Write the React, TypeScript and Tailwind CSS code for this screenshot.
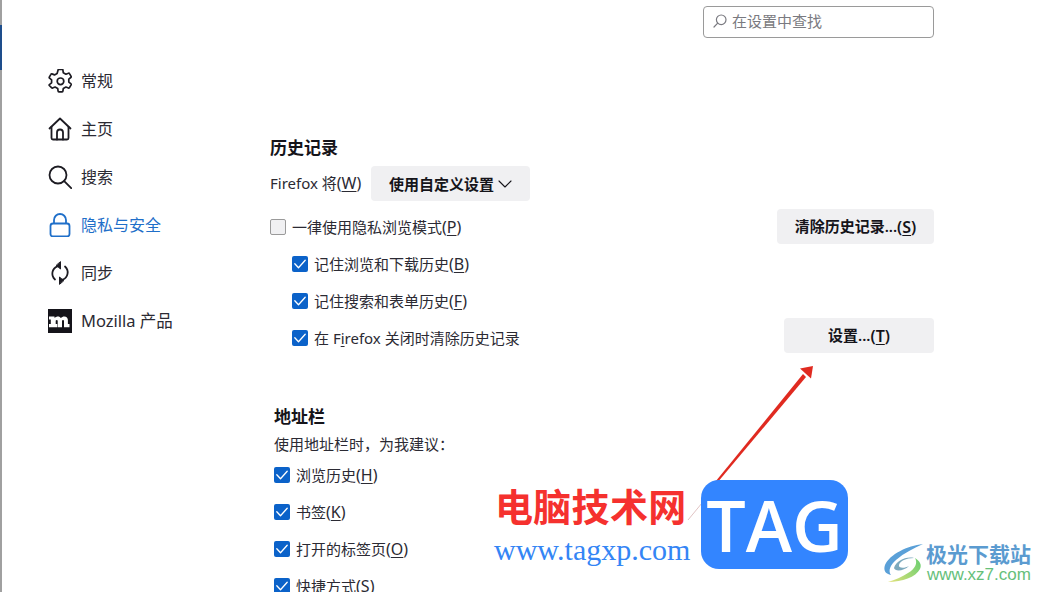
const FONT = "font-['Noto_Sans','Noto_Sans_CJK_SC',sans-serif]";

function Gear() {
  return (
    <svg width="24" height="24" viewBox="0 0 24 24" fill="none" stroke="#1c1b22" strokeWidth="1.7" strokeLinejoin="round">
      <path d="M9.600 1.600c0-.5.400-.8.800-.8h3.200c.4 0 .8.300.8.800l.4 2.700 2.600 1.400 2.500-1c.4-.2.900 0 1.100.4l1.600 2.800c.2.400.1.800-.3 1.100l-2 1.600v3l2 1.600c.4.300.5.700.3 1.100l-1.600 2.800c-.2.400-.7.600-1.100.4l-2.500-1-2.600 1.400-.4 2.700c0 .5-.4.800-.8.800h-3.200c-.4 0-.8-.3-.8-.8l-.4-2.700-2.600-1.400-2.500 1c-.4.200-.9 0-1.100-.4L.800 17c-.2-.4-.1-.8.300-1.100l2-1.600v-3l-2-1.600C.700 9.400.600 9 .800 8.600l1.600-2.800c.2-.4.700-.6 1.100-.4l2.500 1 2.600-1.400z" transform="translate(.5 -.5)" />
      <circle cx="12.500" cy="12.300" r="3.300" />
    </svg>
  );
}
function Home() {
  return (
    <svg width="24" height="24" viewBox="0 0 24 24" fill="none" stroke="#1c1b22" strokeWidth="1.8" strokeLinejoin="round" strokeLinecap="round">
      <path d="M1.500 11.500 12 1.500l10.500 10" />
      <path d="M3.500 10v11a1.500 1.500 0 0 0 1.500 1.500h14a1.500 1.500 0 0 0 1.500-1.500V10" />
      <path d="M9 22.500V15.500a3 3 0 0 1 6 0v7" />
    </svg>
  );
}
function Search() {
  return (
    <svg width="24" height="24" viewBox="0 0 24 24" fill="none" stroke="#1c1b22" strokeWidth="1.8" strokeLinecap="round">
      <circle cx="10" cy="10" r="8.500" />
      <path d="m16.200 16.200 7 7" />
    </svg>
  );
}
function Lock() {
  return (
    <svg width="24" height="24" viewBox="0 0 24 24" fill="none" stroke="#1f6fc9" strokeWidth="1.800" strokeLinejoin="round">
      <rect x="2.500" y="10.500" width="19" height="13" rx="2.500" />
      <path d="M6 10.500V7a6 6 0 0 1 12 0v3.500" />
    </svg>
  );
}
function Sync() {
  return (
    <svg width="24" height="24" viewBox="0 0 24 24" fill="none" stroke="#1c1b22" strokeWidth="1.800" strokeLinecap="round">
      <path d="M9.500 5.300A7.800 7.800 0 0 0 7 18.500" />
      <path d="M14.500 18.700A7.800 7.800 0 0 0 17 5.500" />
      <path d="M12.500 1v7L8.500 4.500z" fill="#1c1b22" strokeWidth="1" strokeLinejoin="round" />
      <path d="M11.500 23v-7l4 3.500z" fill="#1c1b22" strokeWidth="1" strokeLinejoin="round" />
    </svg>
  );
}
function MozillaM() {
  return (
    <div className="flex h-6 w-6 items-center justify-center bg-[#15141a]">
      <svg width="24" height="24" viewBox="0 0 24 24" fill="#fff">
        <path d="M1 7.600h5.400l.3 1.300c.9-1 2-1.500 3.200-1.500 1.400 0 2.400.6 2.900 1.700 1-1.100 2.200-1.700 3.500-1.700 2.200 0 3.600 1.400 3.600 3.700v4h1.600v3.100H16v-6.200c0-.7-.3-1.100-.9-1.100-.4 0-.8.200-1.100.5v6.800H9.700v-6.200c0-.7-.3-1.100-.9-1.100-.4 0-.8.200-1.100.5v3.700h1.500v3.100H1v-3.100h1.800v-4.700H1z" />
      </svg>
    </div>
  );
}

function NavItem({ icon, label, active }: { icon: React.ReactNode; label: React.ReactNode; active?: boolean }) {
  return (
    <div className={`flex h-12 items-center gap-[9px] text-[16px] leading-6 ${active ? "text-[#1f6fc9]" : "text-[#2b2a33]"}`}>
      <span className="flex h-6 w-6 shrink-0 items-center justify-center">{icon}</span>
      <span>{label}</span>
    </div>
  );
}

function Mnemonic({ children }: { children: string }) {
  return (
    <span className="text-[16px]">
      (<span className="underline underline-offset-2">{children}</span>)
    </span>
  );
}

function Check({ checked = true }: { checked?: boolean }) {
  if (!checked) {
    return <span className="h-4 w-4 shrink-0 rounded-[2px] border border-[#9a9a9a] bg-[#f0f0f2]" />;
  }
  return (
    <span className="flex h-4 w-4 shrink-0 items-center justify-center rounded-[2px] bg-[#0b62c9]">
      <svg width="14" height="14" viewBox="0 0 14 14" fill="none" stroke="#fff" strokeWidth="1.300" strokeLinecap="round" strokeLinejoin="round">
        <path d="m1.800 6.800 3.700 4 6.700-7.600" />
      </svg>
    </span>
  );
}

function CheckRow({ children, checked, className = "" }: { children: React.ReactNode; checked?: boolean; className?: string }) {
  return (
    <div className={`flex h-5 items-center gap-[6px] text-[15px] leading-5 text-[#2b2a33] ${className}`}>
      <Check checked={checked} />
      <span className="whitespace-nowrap">{children}</span>
    </div>
  );
}

function Btn({ children, className = "" }: { children: React.ReactNode; className?: string }) {
  return (
    <div className={`flex h-[35px] items-center justify-center rounded-[4px] bg-[#f0f0f2] text-[15px] font-semibold text-[#15141a] ${className}`}>
      {children}
    </div>
  );
}

export default function App() {
  return (
    <div className={`relative h-[592px] w-[1042px] overflow-hidden bg-white ${FONT}`}>
      <div className="absolute left-0 top-0 h-full w-[2px] bg-[#a0a0a0]" />
      <div className="absolute left-0 top-[25px] h-[45px] w-[2px] bg-[#1e4e8c]" />

      <div className="flex h-full">
        <nav className="w-[270px] shrink-0 pl-[48px] pt-[57px]">
          <NavItem icon={<Gear />} label="常规" />
          <NavItem icon={<Home />} label="主页" />
          <NavItem icon={<Search />} label="搜索" />
          <NavItem icon={<Lock />} label="隐私与安全" active />
          <NavItem icon={<Sync />} label="同步" />
          <NavItem icon={<MozillaM />} label={<span className="text-[16.500px]">Mozilla 产品</span>} />
        </nav>

        <main className="w-[664px] shrink-0 pt-[6px]">
          <div className="flex justify-end">
            <div className="flex h-[32px] w-[231px] items-center rounded-[4px] border border-[#9a9a9a] pb-[2px] pl-[9px] text-[15px] text-[#7a7a80]">
              <svg width="14" height="14" viewBox="0 0 14 14" fill="none" stroke="#7a7a80" strokeWidth="1.200" strokeLinecap="round" className="mr-[5px]">
                <circle cx="8.200" cy="5.800" r="4.800" />
                <path d="M4.700 9.200 1 13" />
              </svg>
              在设置中查找
            </div>
          </div>

          <h2 className="mt-[98px] text-[17px] font-bold leading-6 text-[#15141a]">历史记录</h2>

          <div className="mt-[6px] flex items-center text-[15px] leading-5 text-[#2b2a33]">
            <span className="w-[101px] whitespace-nowrap pb-[2px]">
              Firefox 将<Mnemonic>W</Mnemonic>
            </span>
            <Btn className="w-[159px] gap-[4px]">
              使用自定义设置
              <svg width="14" height="14" viewBox="0 0 14 14" fill="none" stroke="#15141a" strokeWidth="1.100" strokeLinecap="round" strokeLinejoin="round">
                <path d="m1 4 6 6 6-6" />
              </svg>
            </Btn>
          </div>

          <div className="mt-[8px] flex items-center justify-between">
            <CheckRow checked={false}>
              一律使用隐私浏览模式<Mnemonic>P</Mnemonic>
            </CheckRow>
            <Btn className="w-[157px]">
              清除历史记录...<Mnemonic>S</Mnemonic>
            </Btn>
          </div>

          <div className="ml-[22px] mt-[10px] flex flex-col gap-[17px]">
            <CheckRow>
              记住浏览和下载历史<Mnemonic>B</Mnemonic>
            </CheckRow>
            <CheckRow>
              记住搜索和表单历史<Mnemonic>F</Mnemonic>
            </CheckRow>
          </div>

          <div className="ml-[22px] mt-[7px] flex items-start justify-between">
            <CheckRow className="mt-[10px]">
              在 F<span className="underline underline-offset-2">i</span>refox 关闭时清除历史记录
            </CheckRow>
            <Btn className="w-[150px]">
              设置...<Mnemonic>T</Mnemonic>
            </Btn>
          </div>

          <div className="ml-[4px] mt-[52px]">
            <h2 className="text-[17px] font-bold leading-6 text-[#15141a]">地址栏</h2>
            <p className="mt-[5px] text-[15px] leading-5 text-[#2b2a33]">使用地址栏时，为我建议：</p>
            <div className="mt-[11px] flex flex-col gap-[17px]">
              <CheckRow>
                浏览历史<Mnemonic>H</Mnemonic>
              </CheckRow>
              <CheckRow>
                书签<Mnemonic>K</Mnemonic>
              </CheckRow>
              <CheckRow>
                打开的标签页<Mnemonic>O</Mnemonic>
              </CheckRow>
              <CheckRow>
                快捷方式<Mnemonic>S</Mnemonic>
              </CheckRow>
            </div>
          </div>
        </main>
      </div>

      {/* annotation arrow */}
      <svg className="absolute left-0 top-0" width="1042" height="592" viewBox="0 0 1042 592" fill="none">
        <path d="M688 520 L707 497" stroke="#d8b4b4" strokeWidth="0.800" />
        <path d="M702.500 497.500 L803 374 L806 377 L704 498.500z" fill="#e02a20" />
        <path d="M813 366 L800 368.500 L811 378.500z" fill="#e02a20" />
      </svg>

      {/* watermark: site name */}
      <div className="absolute left-[495px] top-[482px] whitespace-nowrap font-['Noto_Sans_CJK_SC',sans-serif] text-[38px] font-bold leading-[46px] tracking-[0.300px] text-[#f5312e]">
        电脑技术网
      </div>
      <div className="absolute left-[494px] top-[532px] whitespace-nowrap font-['Liberation_Serif',serif] text-[30px] leading-[36px] text-[#3485f5]">
        www.tagxp.com
      </div>
      <div className="absolute left-[701px] top-[480px] flex h-[89px] w-[147px] items-center justify-center rounded-[18px] bg-[#3385ff] font-['Open_Sans',sans-serif] text-[70px] font-semibold leading-none text-white">
        TAG
      </div>

      {/* watermark: xz7 */}
      <svg className="absolute left-[882px] top-[541px]" width="46" height="43" viewBox="0 0 46 43" fill="none">
        <defs>
          <linearGradient id="xz7green" x1="6" y1="41" x2="38" y2="18" gradientUnits="userSpaceOnUse">
            <stop offset="0" stopColor="#e4e27a" />
            <stop offset="1" stopColor="#6ccf72" />
          </linearGradient>
        </defs>
        <path d="M41 3C25 5 8 13 3 24c-2 6 1 9 6 10-3-4-1-10 5-15C22 12 32 7 41 3z" fill="#5aa0d8" />
        <path d="M12 27c2-7 12-12 20-10-8 0-14 3-15 7-1 3 5 4 10 1-5 5-14 6-15 2z" fill="#7ca9bd" />
        <path d="M6 41c14 0 28-5 32-13 2-4 0-8-5-11 3 5 0 11-7 15-6 4-13 7-20 9z" fill="url(#xz7green)" />
      </svg>
      <div className="absolute left-[926px] top-[541px] whitespace-nowrap font-['Noto_Sans_CJK_SC',sans-serif] text-[21px] font-bold leading-[24px] text-[#5b9bd0]">
        极光下载站
      </div>
      <div className="absolute left-[927px] top-[566px] whitespace-nowrap font-['Liberation_Sans',sans-serif] text-[17px] leading-[18px] text-[#66c07a]">
        www.xz7.com
      </div>
    </div>
  );
}
